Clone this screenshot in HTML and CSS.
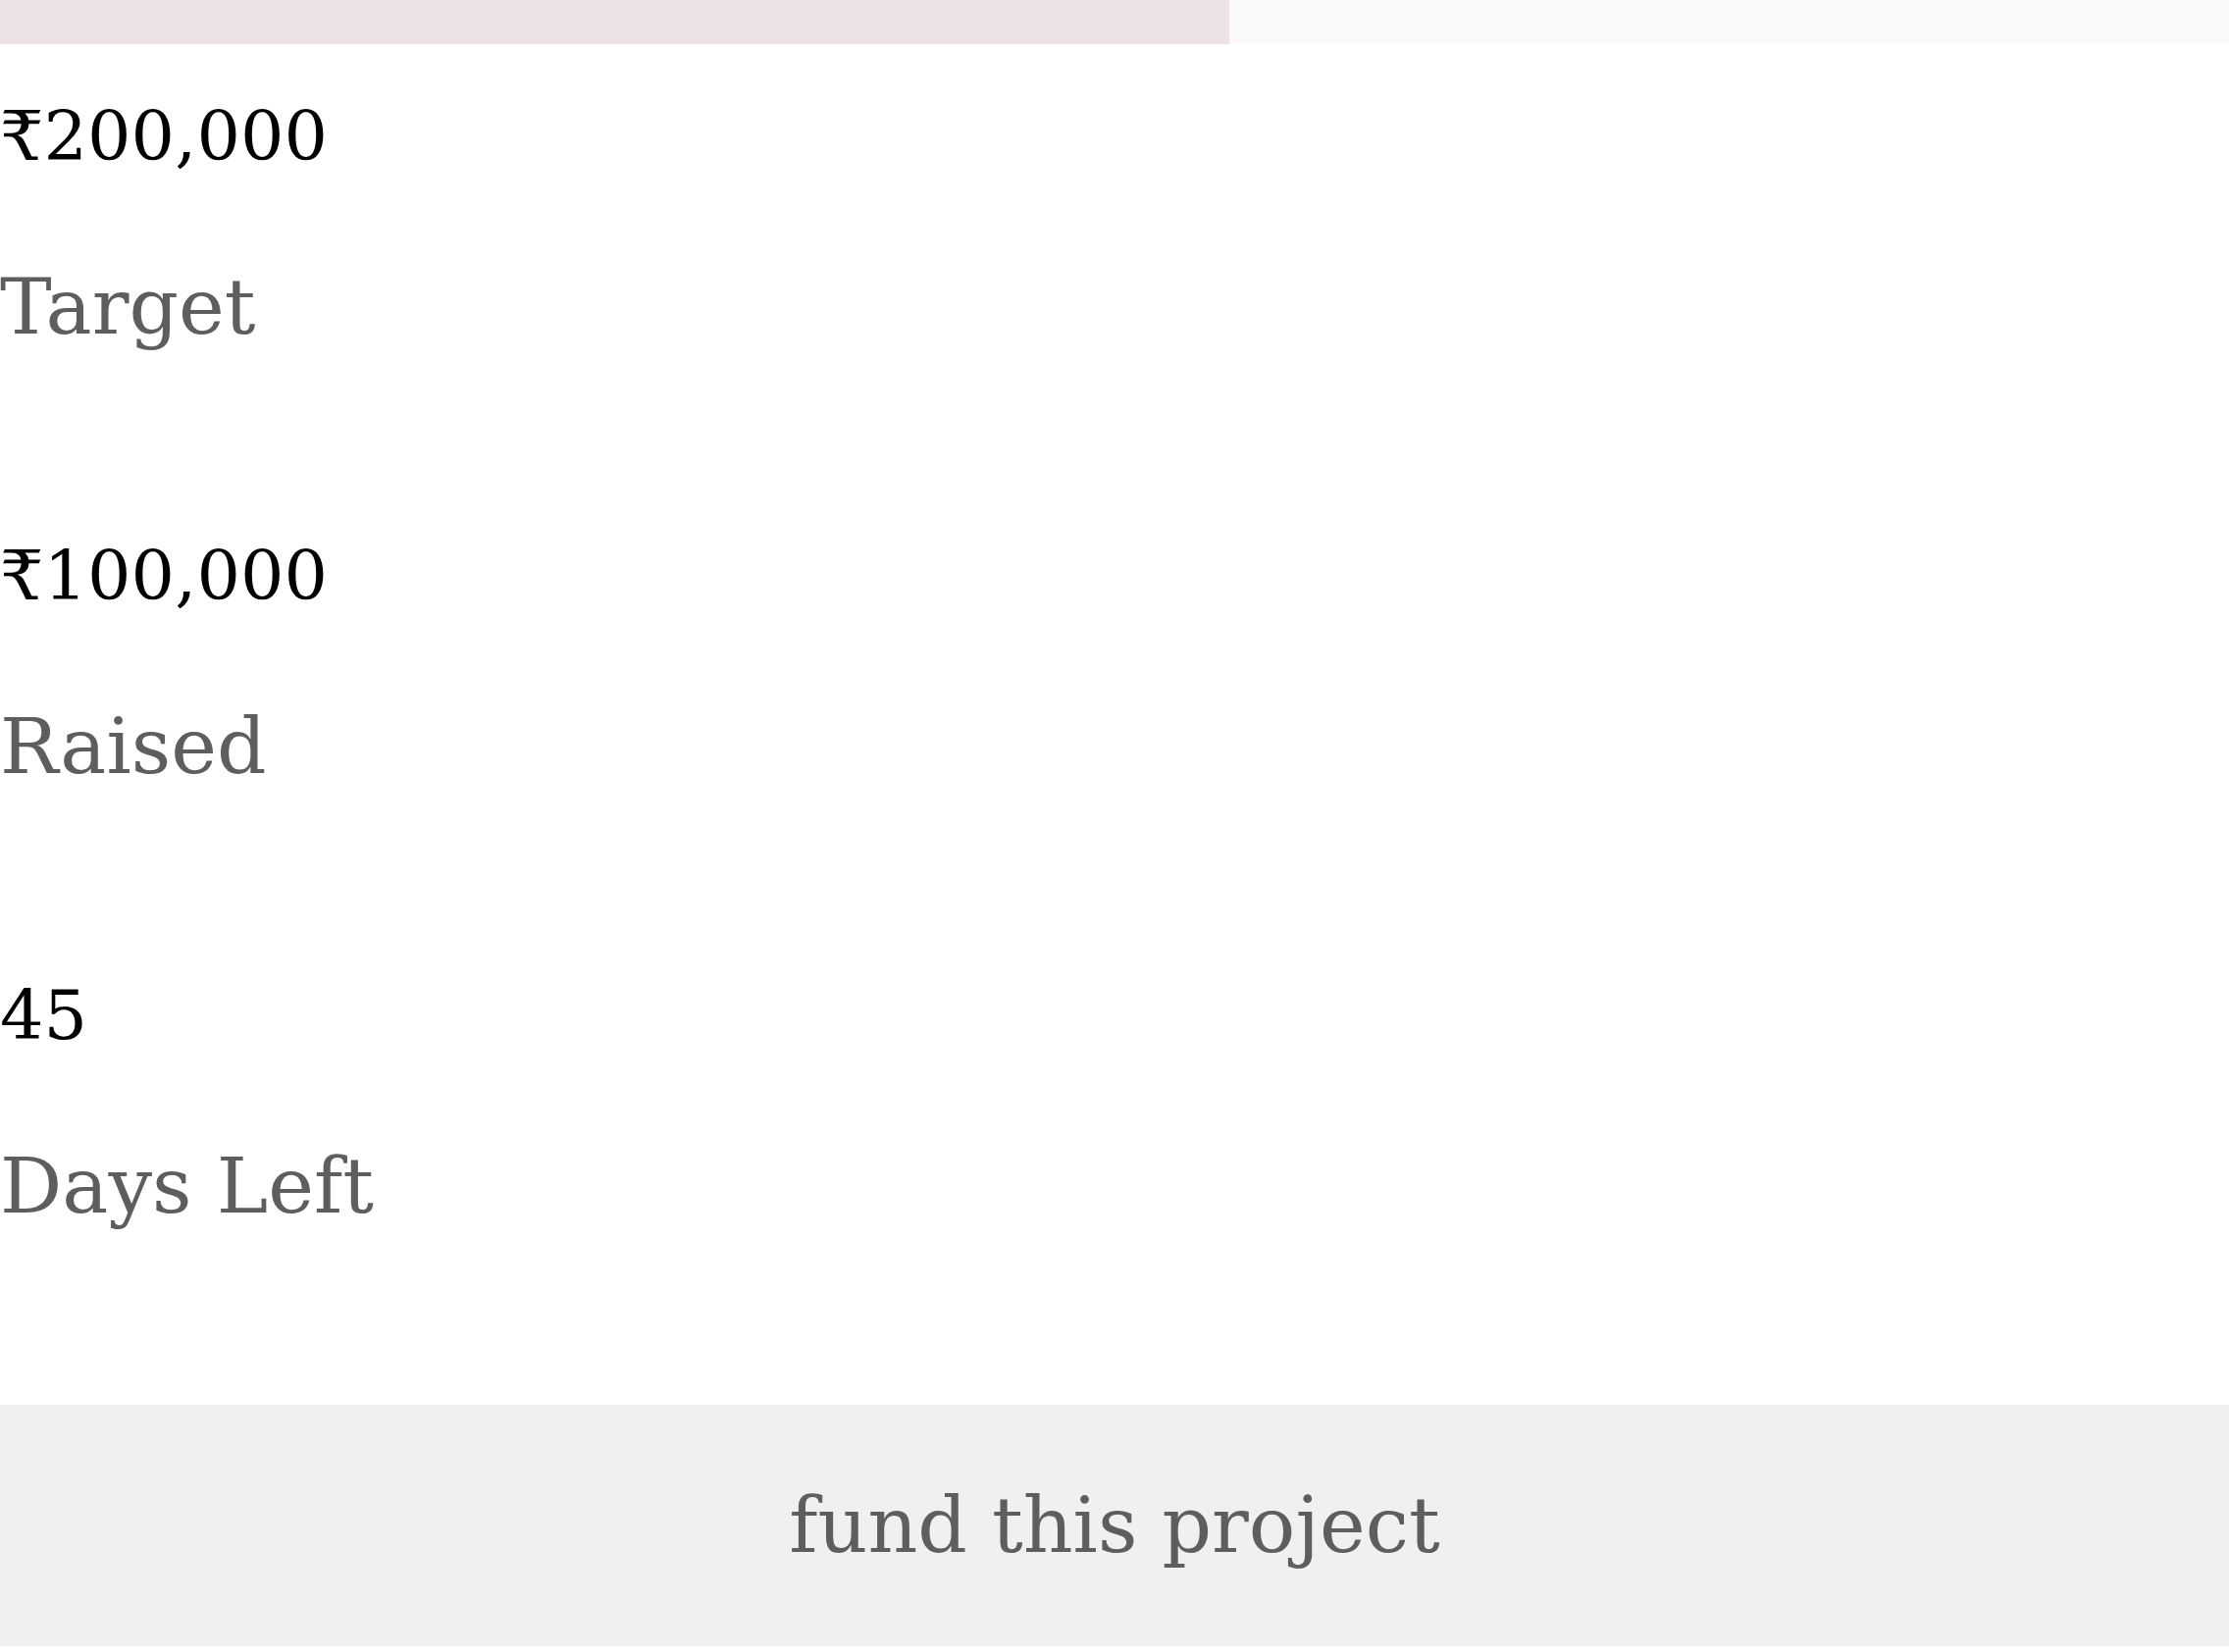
FILE: index.html
```html
<!DOCTYPE html>
<html lang="en">
<head>
<meta charset="utf-8">
<title>Fund this project</title>
<link rel="stylesheet" href="styles.css">
</head>
<body>
<div class="progress">
  <div class="progress-fill" style="width: 55.15%"></div>
</div>
<div class="stats">
  <div class="stat">
    <div class="stat-value">₹200,000</div>
    <div class="stat-label">Target</div>
  </div>
  <div class="stat">
    <div class="stat-value">₹100,000</div>
    <div class="stat-label">Raised</div>
  </div>
  <div class="stat">
    <div class="stat-value">45</div>
    <div class="stat-label">Days Left</div>
  </div>
</div>
<button class="fund-button" type="button">fund this project</button>
</body>
</html>
```
FILE: styles.css
```css
html, body {
  margin: 0;
  padding: 0;
  background: #ffffff;
}

body {
  font-family: "DejaVu Serif", "Liberation Serif", serif;
  display: flex;
  flex-direction: column;
}

.progress {
  height: 45px;
  background: #fbf9f8;
  display: flex;
}

.progress-fill {
  height: 100%;
  background: #ede3e4;
}

.stats {
  display: flex;
  flex-direction: column;
  gap: 185px;
  margin-top: 52px;
}

.stat {
  display: flex;
  flex-direction: column;
  gap: 85px;
}

.stat-value {
  font-size: 70px;
  line-height: 84px;
  color: #000000;
}

.stat-label {
  font-size: 79px;
  line-height: 94px;
  color: #5e5e5e;
}

.fund-button {
  margin-top: 176px;
  width: 100%;
  border: none;
  background: #f1f0ee;
  padding: 76px 0;
  font-family: "DejaVu Serif", "Liberation Serif", serif;
  font-size: 79px;
  line-height: 94px;
  color: #5e5e5e;
  text-align: center;
  cursor: pointer;
}
```
